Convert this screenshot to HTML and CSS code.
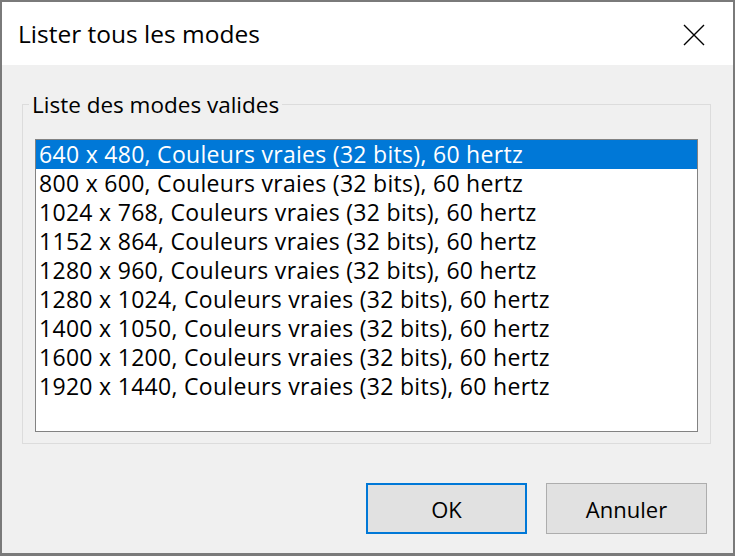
FILE: index.html
```html
<!DOCTYPE html>
<html lang="fr">
<head>
    <meta charset="UTF-8">
    <meta name="viewport" content="width=device-width, initial-scale=1.0">
    <title>Lister tous les modes</title>
    <link rel="stylesheet" href="styles.css">
</head>
<body>
    <div class="window">
        <div class="titlebar">
            <span class="title">Lister tous les modes</span>
            <button class="close-btn" title="Fermer">
                <svg viewBox="0 0 22 22" width="22" height="22">
                    <path d="M1,1L21,21M21,1L1,21" stroke="#000" stroke-width="1.4" fill="none" />
                </svg>
            </button>
        </div>

        <div class="content">
            <fieldset class="group">
                <legend>Liste des modes valides</legend>
                <ul class="listbox" id="modes"></ul>
            </fieldset>

            <div class="actions">
                <button class="btn btn-default">OK</button>
                <button class="btn">Annuler</button>
            </div>
        </div>
    </div>

    <script>
        // Modes d'affichage disponibles
        const modes = [
            [640, 480], [800, 600], [1024, 768], [1152, 864], [1280, 960],
            [1280, 1024], [1400, 1050], [1600, 1200], [1920, 1440]
        ];

        const list = document.getElementById('modes');

        modes.forEach(([w, h], index) => {
            const item = document.createElement('li');
            item.className = 'mode' + (index === 0 ? ' selected' : '');
            item.textContent = `${w} x ${h}, Couleurs vraies (32 bits), 60 hertz`;
            item.onclick = () => {
                list.querySelectorAll('.mode').forEach(m => m.classList.remove('selected'));
                item.classList.add('selected');
            };
            list.appendChild(item);
        });
    </script>
</body>
</html>
```

FILE: styles.css
```css
* {
    box-sizing: border-box;
}
body {
    margin: 0;
    font-family: 'Open Sans', 'Noto Sans', sans-serif;
    color: #000;
}
.window {
    width: 735px;
    height: 556px;
    display: flex;
    flex-direction: column;
    border: 2px solid #7a7a7a;
    border-bottom-width: 3px;
    background-color: #f0f0f0;
}
.titlebar {
    height: 63px;
    flex-shrink: 0;
    background-color: #fff;
    display: flex;
    align-items: center;
    justify-content: space-between;
    padding-left: 16px;
}
.title {
    font-size: 24.5px;
    margin-top: -1px;
}
.close-btn {
    width: 46px;
    height: 46px;
    margin-right: 16px;
    margin-top: 2px;
    border: none;
    background: none;
    padding: 0;
    display: flex;
    align-items: center;
    justify-content: center;
}
.content {
    flex-grow: 1;
    display: flex;
    flex-direction: column;
    padding: 25px 22px 0 20px;
}
.group {
    margin: 0;
    padding: 20px 12px 11px 12px;
    border: 1px solid #dcdcdc;
}
.group legend {
    font-size: 22.5px;
    line-height: 29px;
    padding: 0 3px;
    margin-left: -6px;
}
.listbox {
    list-style: none;
    margin: 0;
    padding: 0;
    height: 293px;
    background-color: #fff;
    border: 1px solid #828282;
}
.mode {
    font-size: 23px;
    letter-spacing: 0.3px;
    line-height: 29px;
    height: 29px;
    padding-left: 3px;
    white-space: nowrap;
    cursor: default;
}
.mode.selected {
    background-color: #0078d7;
    color: #fff;
}
.actions {
    display: flex;
    justify-content: flex-end;
    gap: 19px;
    margin-top: 39px;
    padding-right: 4px;
}
.btn {
    width: 161px;
    height: 51px;
    font-family: inherit;
    font-size: 22px;
    background-color: #e1e1e1;
    border: 1px solid #adadad;
    color: #000;
}
.btn-default {
    border: 2px solid #0078d7;
}
```
